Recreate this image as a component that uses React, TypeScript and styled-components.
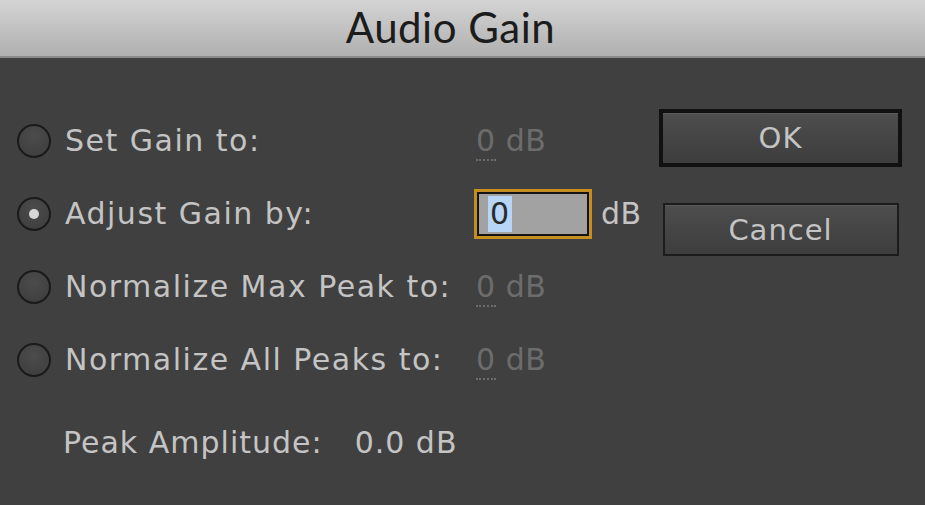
import React from "react";
import styled, { createGlobalStyle } from "styled-components";

const GlobalStyle = createGlobalStyle`
  html, body {
    margin: 0;
    padding: 0;
    background: #404040;
    overflow: hidden;
  }
  body {
    font-family: "DejaVu Sans", "Liberation Sans", sans-serif;
  }
`;

type GainMode = {
  id: string;
  label: string;
  editable?: boolean;
};

const modes: GainMode[] = [
  { id: "set", label: "Set Gain to:" },
  { id: "adjust", label: "Adjust Gain by:", editable: true },
  { id: "max", label: "Normalize Max Peak to:" },
  { id: "all", label: "Normalize All Peaks to:" },
];

const App: React.FC = () => {
  const selected = "adjust";

  return (
    <>
      <GlobalStyle />
      <Dialog>
        <TitleBar>Audio Gain</TitleBar>
        <Body>
          <Options>
            {modes.map((mode) => (
              <Row key={mode.id}>
                <Radio $checked={mode.id === selected} />
                <Label>{mode.label}</Label>
                {mode.editable ? (
                  <>
                    <GainInput>
                      <Selection>0</Selection>
                    </GainInput>
                    <Unit>dB</Unit>
                  </>
                ) : (
                  <DimValue>
                    <Scrubby>0</Scrubby> dB
                  </DimValue>
                )}
              </Row>
            ))}
            <PeakRow>
              <PeakLabel>Peak Amplitude:</PeakLabel>
              <span>0.0 dB</span>
            </PeakRow>
          </Options>
          <Buttons>
            <Button $default>OK</Button>
            <Button>Cancel</Button>
          </Buttons>
        </Body>
      </Dialog>
    </>
  );
};

export default App;

const Dialog = styled.div`
  width: 925px;
  height: 505px;
  display: flex;
  flex-direction: column;
  background: #404040;
`;

const TitleBar = styled.div`
  height: 54px;
  flex-shrink: 0;
  display: flex;
  align-items: center;
  justify-content: center;
  padding: 0 24px 2px 0;
  background: linear-gradient(#d4d4d4, #c0c0c0 55%, #b0b0b0);
  border-bottom: 2px solid #8a8a8a;
  color: #1c1c1c;
  font-family: Lato, "Open Sans", sans-serif;
  font-size: 42px;
  letter-spacing: 0.5px;
`;

const Body = styled.div`
  flex: 1;
  display: flex;
  justify-content: space-between;
  padding: 46px 23px 0 17px;
`;

const Options = styled.div`
  display: flex;
  flex-direction: column;
`;

const Row = styled.div`
  height: 73px;
  display: flex;
  align-items: center;
  font-size: 30px;
  letter-spacing: 1.5px;
  color: #c4c4c4;
`;

const Radio = styled.span<{ $checked?: boolean }>`
  width: 30px;
  height: 30px;
  flex-shrink: 0;
  border-radius: 50%;
  border: 2px solid #1a1a1a;
  background: radial-gradient(circle at 50% 35%, #4c4c4c, #3c3c3c);
  display: flex;
  align-items: center;
  justify-content: center;
  margin-right: 14px;

  &::after {
    content: "";
    width: 10px;
    height: 10px;
    border-radius: 50%;
    background: #d8d8d8;
    display: ${(p) => (p.$checked ? "block" : "none")};
  }
`;

const Label = styled.span`
  width: 409px;
  white-space: nowrap;
`;

const DimValue = styled.span`
  color: #6c6c6c;
  margin-left: 2px;
  letter-spacing: 0.5px;
  white-space: nowrap;
`;

const Scrubby = styled.span`
  border-bottom: 2px dotted #6c6c6c;
  padding-bottom: 1px;
`;

const GainInput = styled.span`
  box-sizing: border-box;
  width: 118px;
  height: 50px;
  border: 3px solid #c68e1e;
  box-shadow: inset 0 0 0 2px #141414;
  background: #a2a2a2;
  display: flex;
  align-items: center;
  padding-left: 11px;
`;

const Selection = styled.span`
  background: #b6d5f7;
  color: #2a2a2a;
  line-height: 36px;
  padding: 0 1px 0 2px;
`;

const Unit = styled.span`
  margin-left: 9px;
  letter-spacing: 0.5px;
`;

const PeakRow = styled.div`
  height: 73px;
  margin-top: 10px;
  padding-left: 46px;
  display: flex;
  align-items: center;
  font-size: 30px;
  letter-spacing: 1px;
  color: #c4c4c4;
`;

const PeakLabel = styled.span`
  margin-right: 32px;
`;

const Buttons = styled.div`
  display: flex;
  flex-direction: column;
  align-items: center;
  gap: 36px;
  padding-top: 5px;
`;

const Button = styled.div<{ $default?: boolean }>`
  box-sizing: border-box;
  width: ${(p) => (p.$default ? 243 : 236)}px;
  height: ${(p) => (p.$default ? 58 : 53)}px;
  border: ${(p) => (p.$default ? "4px solid #111" : "2px solid #1c1c1c")};
  background: linear-gradient(#4e4e4e, #444 55%, #3e3e3e);
  box-shadow: inset 0 1px 0 #5a5a5a;
  display: flex;
  align-items: center;
  justify-content: center;
  color: #c4c4c4;
  font-size: 29px;
  letter-spacing: 1px;
`;
